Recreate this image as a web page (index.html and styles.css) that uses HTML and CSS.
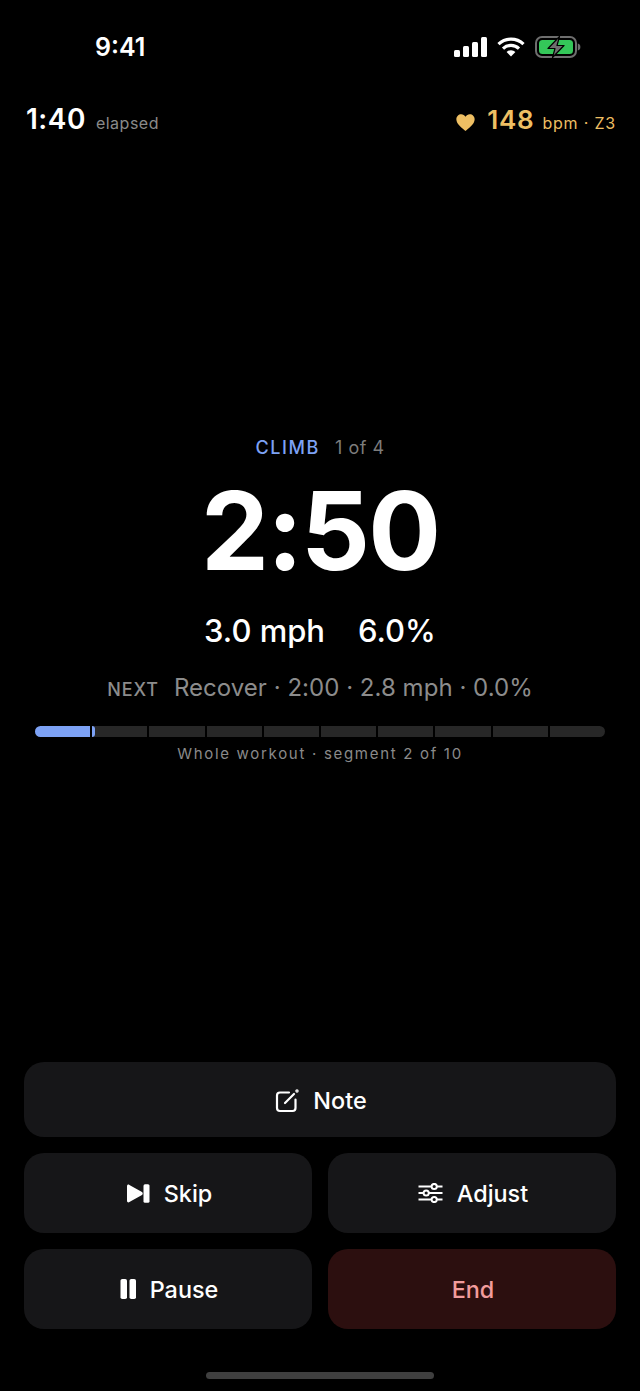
FILE: index.html
```html
<!DOCTYPE html>
<html lang="en">
  <head>
    <meta charset="UTF-8">
    <title>Workout</title>
    <link rel="stylesheet" href="styles.css">
  </head>
  <body>
    <div class="screen">
      <div class="status">
        <span class="clock">9:41</span>
        <div class="status-icons">
          <svg width="33" height="20" viewBox="0 0 33 20">
            <rect x="0" y="13" width="6" height="7" rx="1.5" />
            <rect x="9" y="9" width="6" height="11" rx="1.5" />
            <rect x="18" y="5" width="6" height="15" rx="1.5" />
            <rect x="27" y="0" width="6" height="20" rx="1.5" />
          </svg>
          <svg width="28" height="20" viewBox="0 0 28 20" fill="none" stroke="#fff" stroke-width="3.2">
            <path d="M1.5 7.2 A18 18 0 0 1 26.5 7.2" />
            <path d="M6 11.6 A11.6 11.6 0 0 1 22 11.6" />
            <path d="M14 19.5 L9.6 15 A6.2 6.2 0 0 1 18.4 15 Z" fill="#fff" stroke="none" />
          </svg>
          <svg width="46" height="22" viewBox="0 0 46 22">
            <rect x="1" y="1" width="40" height="20" rx="6" fill="none" stroke="#6e6e6e" stroke-width="2" />
            <rect x="4" y="4" width="34" height="14" rx="3.5" fill="#34c759" />
            <path d="M42.8 7.5 C44.6 8 45.4 9.4 45.4 11 C45.4 12.6 44.6 14 42.8 14.5 Z" fill="#6e6e6e" />
            <path d="M24.5 0.5 L13 12.5 H20 L17.5 21.5 L29 9.5 H22 Z" fill="#6e6e6e" stroke="#000" stroke-width="1.2" stroke-linejoin="round" />
          </svg>
        </div>
      </div>

      <div class="topline">
        <div class="elapsed"><b>1:40</b><span>elapsed</span></div>
        <div class="heart">
          <svg width="19" height="17" viewBox="0 0 20 18">
            <path d="M10 18 C7 15.4 0.3 11 0.3 5.6 C0.3 2.4 2.7 0.2 5.5 0.2 C7.4 0.2 9 1.2 10 3 C11 1.2 12.6 0.2 14.5 0.2 C17.3 0.2 19.7 2.4 19.7 5.6 C19.7 11 13 15.4 10 18 Z" />
          </svg>
          <b>148</b><span>bpm · Z3</span>
        </div>
      </div>

      <div class="main">
        <div class="segment-name"><b>CLIMB</b><span>1 of 4</span></div>
        <div class="countdown">2:50</div>
        <div class="targets"><span>3.0 mph</span><span>6.0%</span></div>
        <div class="next"><b>NEXT</b><span>Recover · 2:00 · 2.8 mph · 0.0%</span></div>
        <div class="track">
          <div class="seg done"></div>
          <div class="seg current"><i></i></div>
          <div class="seg"></div>
          <div class="seg"></div>
          <div class="seg"></div>
          <div class="seg"></div>
          <div class="seg"></div>
          <div class="seg"></div>
          <div class="seg"></div>
          <div class="seg"></div>
        </div>
        <div class="track-label">Whole workout · segment 2 of 10</div>
      </div>

      <div class="actions">
        <button class="btn wide">
          <svg width="24" height="24" viewBox="0 0 24 24" fill="none" stroke="#fff" stroke-width="2.2" stroke-linecap="round" stroke-linejoin="round">
            <path d="M14 3.5 H5 A3 3 0 0 0 2 6.5 V19 A3 3 0 0 0 5 22 H17.5 A3 3 0 0 0 20.5 19 V10.5" />
            <path d="M10 14 L19 5" />
            <circle cx="22" cy="2" r="0.6" fill="#fff" />
          </svg>
          Note
        </button>
        <button class="btn">
          <svg width="24" height="19" viewBox="0 0 24 19" fill="#fff">
            <path d="M1 2.2 C1 0.8 2.3 0.2 3.4 0.9 L16 8 C17 8.6 17 10.4 16 11 L3.4 18.1 C2.3 18.8 1 18.2 1 16.8 Z" />
            <rect x="17.5" y="0.2" width="6" height="18.6" rx="1.5" />
          </svg>
          Skip
        </button>
        <button class="btn">
          <svg width="25" height="20" viewBox="0 0 25 20" fill="none" stroke="#fff" stroke-width="2">
            <path d="M0.5 3.5 H13.5 M19 3.5 H24.5 M0.5 10 H5.5 M11 10 H24.5 M0.5 16.5 H13.5 M19 16.5 H24.5" />
            <circle cx="16.2" cy="3.5" r="2.6" />
            <circle cx="8.2" cy="10" r="2.6" />
            <circle cx="16.2" cy="16.5" r="2.6" />
          </svg>
          Adjust
        </button>
        <button class="btn">
          <svg width="16" height="20" viewBox="0 0 16 20" fill="#fff">
            <rect x="0.5" y="0" width="6.5" height="20" rx="1.8" />
            <rect x="9.5" y="0" width="6.5" height="20" rx="1.8" />
          </svg>
          Pause
        </button>
        <button class="btn danger">End</button>
      </div>

      <div class="home-bar"></div>
    </div>
  </body>
</html>
```

FILE: styles.css
```css
* {
  box-sizing: border-box;
}

html,
body {
  margin: 0;
  background: #000;
}

.screen {
  display: flex;
  flex-direction: column;
  height: 1391px;
  color: #fff;
  font-family: Inter, "Liberation Sans", sans-serif;
  overflow: hidden;
}

.status {
  display: flex;
  justify-content: space-between;
  align-items: center;
  height: 30px;
  margin-top: 32px;
  padding: 0 59px 0 95px;
}

.clock {
  font-size: 25px;
  font-weight: 600;
}

.status-icons {
  display: flex;
  align-items: center;
  gap: 10px;
}

.status-icons svg {
  fill: #fff;
}

.status-icons svg + svg {
  fill: none;
}

.topline {
  display: flex;
  justify-content: space-between;
  align-items: baseline;
  margin-top: 40px;
  padding: 0 24px 0 26px;
}

.elapsed b {
  font-size: 28px;
  font-weight: 600;
  letter-spacing: 0.5px;
  margin-right: 10px;
}

.elapsed span {
  font-size: 16px;
  color: #8a8a8a;
  letter-spacing: 0.5px;
}

.heart {
  color: #eebf63;
}

.heart svg {
  fill: #eebf63;
  margin-right: 2px;
  vertical-align: -2px;
}

.heart b {
  font-size: 26px;
  font-weight: 600;
  letter-spacing: 0.7px;
  margin: 0 8px 0 6px;
}

.heart span {
  font-size: 16px;
  font-weight: 400;
  letter-spacing: 0.8px;
}

.main {
  display: flex;
  flex-direction: column;
  align-items: center;
  margin-top: 300px;
  padding: 0 35px;
}

.segment-name {
  display: flex;
  gap: 15px;
  font-size: 18px;
  line-height: 24px;
}

.segment-name b {
  color: #7da2f5;
  font-weight: 500;
  letter-spacing: 1.6px;
}

.segment-name span {
  color: #7c7c7c;
  letter-spacing: 0.5px;
}

.countdown {
  font-size: 108px;
  font-weight: 700;
  line-height: 108px;
  letter-spacing: -2px;
  margin-top: 17px;
}

.targets {
  display: flex;
  gap: 33px;
  font-size: 31px;
  font-weight: 500;
  line-height: 36px;
  margin-top: 28px;
}

.next {
  display: flex;
  align-items: baseline;
  gap: 15px;
  margin-top: 23px;
  line-height: 32px;
  color: #8c8c8c;
}

.next b {
  font-size: 18px;
  font-weight: 500;
  letter-spacing: 0.9px;
}

.next span {
  font-size: 24px;
  letter-spacing: 0.03px;
}

.track {
  display: flex;
  gap: 2px;
  width: 100%;
  height: 11px;
  margin-top: 20px;
  border-radius: 6px;
  overflow: hidden;
}

.seg {
  flex: 1;
  background: #272727;
}

.seg.done {
  background: #7da2f5;
}

.seg.current i {
  display: block;
  height: 100%;
  width: 3px;
  background: #7da2f5;
  border-radius: 0 3px 3px 0;
}

.track-label {
  margin-top: 8px;
  font-size: 15px;
  line-height: 18px;
  letter-spacing: 1.7px;
  color: #8a8a8a;
}

.actions {
  display: grid;
  grid-template-columns: 1fr 1fr;
  grid-template-rows: 75px 80px 80px;
  gap: 16px;
  margin-top: auto;
  padding: 0 24px;
}

.btn {
  display: flex;
  align-items: center;
  justify-content: center;
  gap: 14px;
  border: 0;
  border-radius: 20px;
  padding: 0 0 0 2px;
  background: #161618;
  color: #fff;
  font-family: inherit;
  font-size: 23.4px;
  font-weight: 500;
}

.btn.wide {
  grid-column: 1 / 3;
  padding-top: 2px;
}

.btn.danger {
  background: #2c0f0f;
  color: #f29c9c;
}

.home-bar {
  width: 228px;
  height: 7px;
  margin: 43px auto 12px;
  border-radius: 4px;
  background: #3f3f3f;
}
```
